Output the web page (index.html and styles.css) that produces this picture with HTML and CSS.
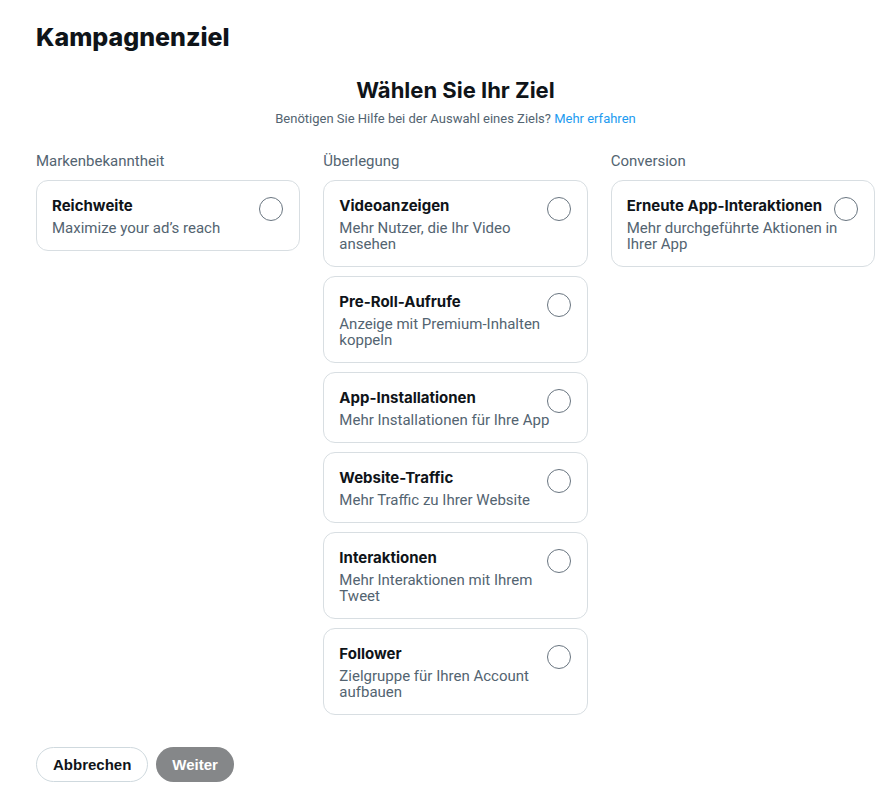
FILE: index.html
```html
<!DOCTYPE html>
<html lang="de">
<head>
<meta charset="utf-8">
<title>Kampagnenziel</title>
<link rel="stylesheet" href="styles.css">
</head>
<body>
<main class="page">
  <h1 class="page-title">Kampagnenziel</h1>
  <section class="intro">
    <h2 class="intro-title">Wählen Sie Ihr Ziel</h2>
    <p class="intro-sub">Benötigen Sie Hilfe bei der Auswahl eines Ziels? <a class="link" href="#">Mehr erfahren</a></p>
  </section>
  <div class="columns">
    <div class="column">
      <div class="col-label">Markenbekanntheit</div>
      <div class="card">
        <div class="card-title">Reichweite</div><div class="card-desc">Maximize your ad’s reach</div>
        <span class="radio"></span>
      </div>
    </div>
    <div class="column">
      <div class="col-label">Überlegung</div>
      <div class="card">
        <div class="card-title">Videoanzeigen</div><div class="card-desc">Mehr Nutzer, die Ihr Video ansehen</div>
        <span class="radio"></span>
      </div>
      <div class="card">
        <div class="card-title">Pre-Roll-Aufrufe</div><div class="card-desc">Anzeige mit Premium-Inhalten koppeln</div>
        <span class="radio"></span>
      </div>
      <div class="card">
        <div class="card-title">App-Installationen</div><div class="card-desc">Mehr Installationen für Ihre App</div>
        <span class="radio"></span>
      </div>
      <div class="card">
        <div class="card-title">Website-Traffic</div><div class="card-desc">Mehr Traffic zu Ihrer Website</div>
        <span class="radio"></span>
      </div>
      <div class="card">
        <div class="card-title">Interaktionen</div><div class="card-desc">Mehr Interaktionen mit Ihrem Tweet</div>
        <span class="radio"></span>
      </div>
      <div class="card">
        <div class="card-title">Follower</div><div class="card-desc">Zielgruppe für Ihren Account aufbauen</div>
        <span class="radio"></span>
      </div>
    </div>
    <div class="column">
      <div class="col-label">Conversion</div>
      <div class="card">
        <div class="card-title">Erneute App-Interaktionen</div><div class="card-desc">Mehr durchgeführte Aktionen in Ihrer App</div>
        <span class="radio"></span>
      </div>
    </div>
  </div>
  <div class="actions">
    <button class="btn btn-outline" type="button">Abbrechen</button>
    <button class="btn btn-filled" type="button">Weiter</button>
  </div>
</main>
</body>
</html>
```
FILE: styles.css
```css
* { box-sizing: border-box; }
html, body { margin: 0; background: #ffffff; }
body {
  font-family: Roboto, "Liberation Sans", Arial, sans-serif;
  color: #0f1419;
}
.page {
  padding: 23px 19px 0 36px;
}
.page-title {
  margin: 0;
  font-family: Inter, Roboto, sans-serif;
  font-size: 25px;
  line-height: 28px;
  font-weight: 800;
}
.intro {
  margin-top: 25px;
  text-align: center;
}
.intro-title {
  margin: 0;
  font-family: Inter, Roboto, sans-serif;
  font-size: 22px;
  line-height: 28px;
  font-weight: 700;
}
.intro-sub {
  margin: 7px 0 0;
  font-size: 13px;
  line-height: 16px;
  color: #536471;
}
.link { color: #1d9bf0; text-decoration: none; }
.columns {
  margin-top: 25px;
  display: grid;
  grid-template-columns: repeat(3, 1fr);
  column-gap: 23px;
  align-items: start;
}
.column {
  display: flex;
  flex-direction: column;
  gap: 9px;
}
.col-label {
  font-size: 15px;
  line-height: 18px;
  color: #536471;
  margin-bottom: 1px;
}
.card {
  position: relative;
  border: 1px solid #d8dee2;
  border-radius: 12px;
  padding: 15px 16px 14px 15px;
}
.card-title {
  padding-right: 30px;
  font-family: Inter, Roboto, sans-serif;
  font-size: 15px;
  line-height: 20px;
  font-weight: 700;
  color: #0f1419;
}
.card-desc {
  margin-top: 4px;
  font-size: 15px;
  line-height: 16px;
  color: #536471;
}
.radio {
  position: absolute;
  top: 16px;
  right: 16px;
  width: 24px;
  height: 24px;
  border: 1px solid #697580;
  border-radius: 50%;
  background: transparent;
}
.actions {
  margin-top: 32px;
  display: flex;
  gap: 8px;
}
.btn {
  height: 35px;
  border-radius: 18px;
  font-family: "Liberation Sans", Arial, sans-serif;
  font-size: 15px;
  font-weight: 700;
  padding: 0 16px;
  cursor: pointer;
}
.btn-outline {
  background: #ffffff;
  color: #0f1419;
  border: 1px solid #cfd9de;
}
.btn-filled {
  background: #858789;
  color: #ffffff;
  border: none;
}
```
